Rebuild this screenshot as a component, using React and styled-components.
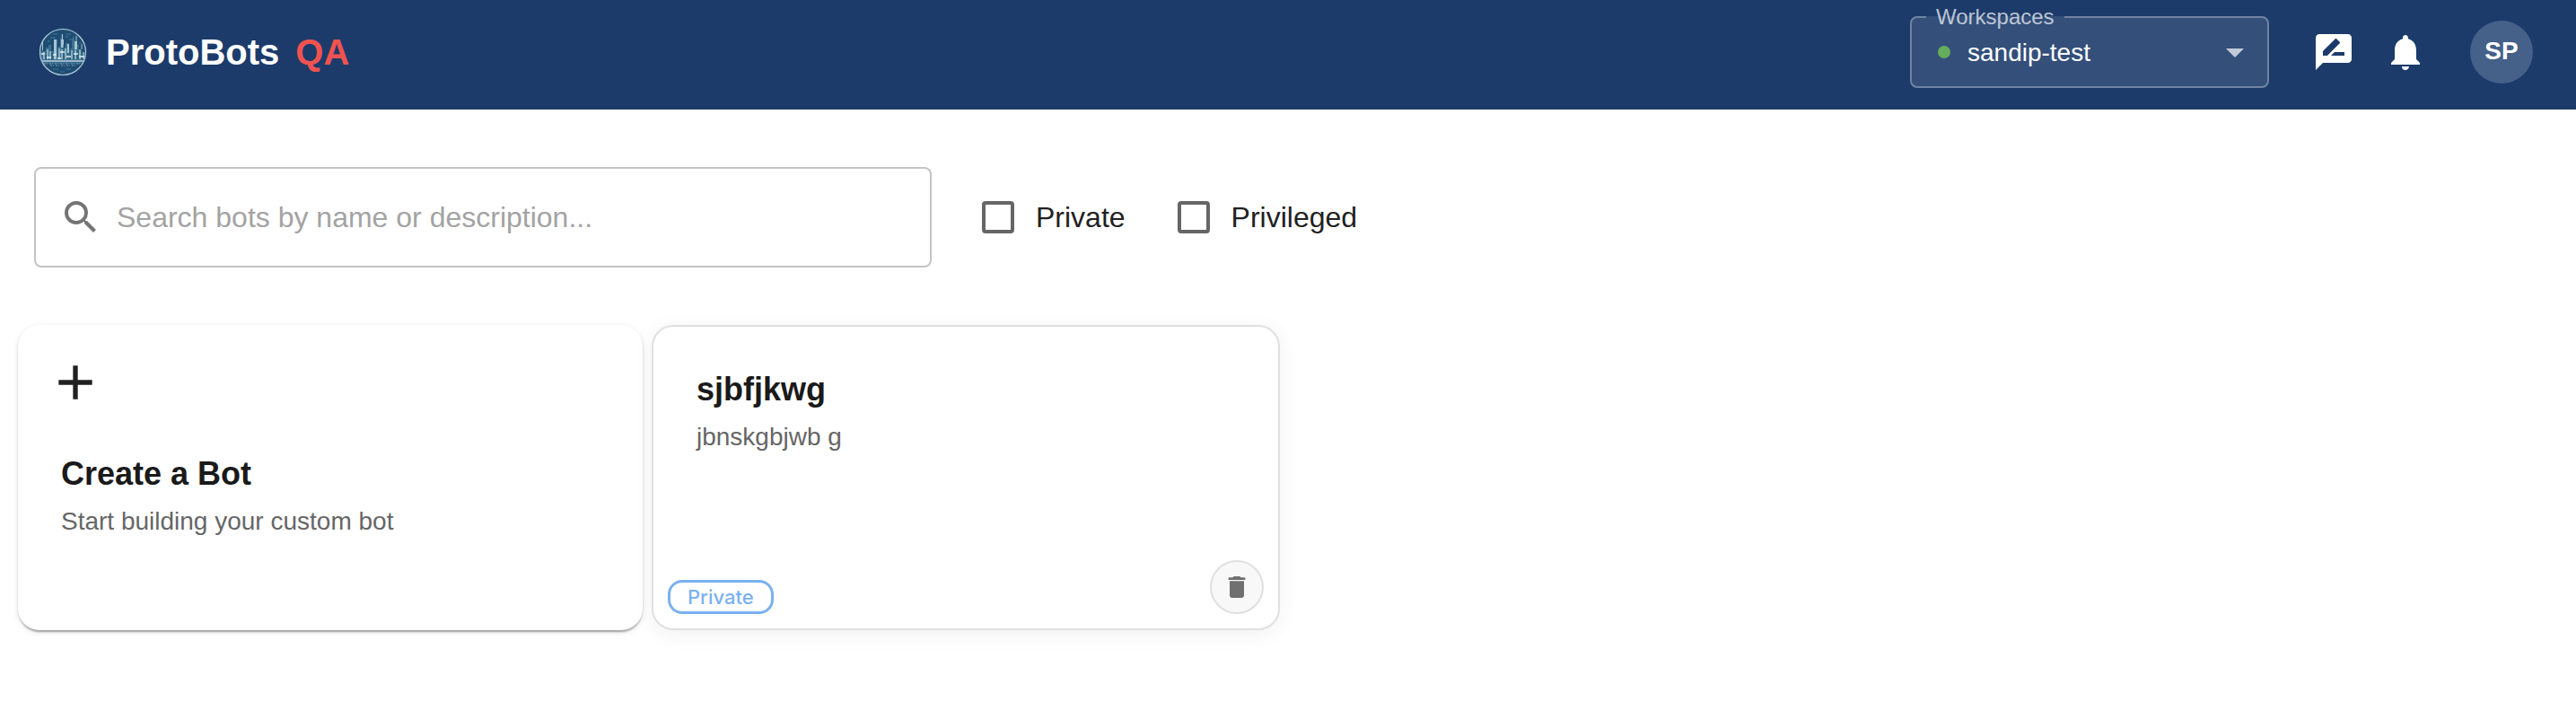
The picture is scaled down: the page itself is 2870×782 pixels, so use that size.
import React from "react";
import styled, { createGlobalStyle } from "styled-components";
import { MdRateReview, MdNotifications, MdSearch, MdAdd, MdDelete } from "react-icons/md";

const GlobalStyle = createGlobalStyle`
  *, *::before, *::after { box-sizing: border-box; }
  body {
    margin: 0;
    background: #fff;
    color: #212121;
    font-family: "Liberation Sans", Arial, sans-serif;
  }
  button, input, select { font-family: inherit; }
  h1, h2, p { margin: 0; }
`;

const Header = styled.header`
  display: flex;
  align-items: center;
  justify-content: space-between;
  min-height: 122px;
  padding: 0 48px 6px 44px;
  background: #1c3b6b;
`;

const Brand = styled.a`
  display: flex;
  align-items: center;
  gap: 18px;
  color: #fff;
  text-decoration: none;
`;

const BrandName = styled.h1`
  font-size: 40px;
  line-height: 48px;
  font-weight: 700;
`;

const EnvTag = styled.span`
  font-size: 40px;
  line-height: 48px;
  font-weight: 700;
  color: #ef5350;
`;

const HeaderActions = styled.div`
  display: flex;
  align-items: center;
`;

const WorkspaceField = styled.div`
  position: relative;
  width: 400px;
  height: 80px;
  margin-right: 32px;
  border-radius: 8px;
  background: rgba(255, 255, 255, 0.1);
`;

const WorkspaceOutline = styled.fieldset`
  position: absolute;
  inset: -11px 0 0;
  margin: 0;
  padding: 0 16px;
  border: 2px solid rgba(255, 255, 255, 0.3);
  border-radius: 8px;
  pointer-events: none;
`;

const WorkspaceLegend = styled.legend`
  padding: 0 11px;
  font-size: 24px;
  line-height: 24px;
  color: rgba(255, 255, 255, 0.7);
`;

const WorkspaceSelect = styled.select`
  width: 100%;
  height: 100%;
  padding: 0 60px 0 64px;
  border: 0;
  appearance: none;
  background: transparent;
  color: #fff;
  font-size: 28px;
`;

const StatusDot = styled.span`
  position: absolute;
  left: 31px;
  top: 33px;
  width: 14px;
  height: 14px;
  border-radius: 50%;
  background: #66ad5b;
  pointer-events: none;
`;

const Caret = styled.span`
  position: absolute;
  right: 28px;
  top: 36px;
  border: 10px solid transparent;
  border-top-color: rgba(255, 255, 255, 0.7);
  border-bottom: 0;
  pointer-events: none;
`;

const IconButton = styled.button`
  display: flex;
  padding: 16px;
  border: 0;
  border-radius: 50%;
  background: transparent;
  color: #fff;
  font-size: 48px;
`;

const Avatar = styled.button`
  width: 70px;
  height: 70px;
  margin-left: 32px;
  padding: 0 0 2px;
  border: 0;
  border-radius: 50%;
  background: #456089;
  color: #fff;
  font-size: 28px;
  font-weight: 700;
`;

const Filters = styled.form`
  display: flex;
  align-items: center;
  gap: 56px;
  padding: 64px 38px;
`;

const SearchField = styled.label`
  display: flex;
  align-items: center;
  gap: 16px;
  width: 1000px;
  height: 112px;
  padding: 0 26px;
  border: 2px solid #c4c4c4;
  border-radius: 8px;
  color: #757575;
  font-size: 48px;
`;

const SearchInput = styled.input`
  flex: 1;
  min-width: 0;
  padding: 0;
  border: 0;
  outline: 0;
  background: transparent;
  font-size: 32px;
  line-height: 46px;
  color: #212121;
  &::placeholder { color: #a3a3a3; opacity: 1; }
`;

const CheckGroup = styled.div`
  display: flex;
  gap: 58px;
`;

const CheckLabel = styled.label`
  display: flex;
  align-items: center;
  gap: 24px;
  font-size: 32px;
  line-height: 48px;
`;

const Checkbox = styled.input`
  appearance: none;
  width: 36px;
  height: 36px;
  margin: 0;
  border: 4px solid #666;
  border-radius: 4px;
  &:checked { background: #1c3b6b; }
`;

const Cards = styled.main`
  display: flex;
  flex-wrap: wrap;
  gap: 10px;
  padding: 0 20px 80px;
`;

const Card = styled.article`
  display: flex;
  flex-direction: column;
  height: 340px;
  border-radius: 24px;
  background: #fff;
`;

const CreateCard = styled(Card)`
  width: 696px;
  padding: 32px 48px;
  box-shadow: 0 4px 2px -2px rgba(0, 0, 0, 0.2), 0 2px 2px rgba(0, 0, 0, 0.14),
    0 2px 6px rgba(0, 0, 0, 0.12);
`;

const BotCard = styled(Card)`
  width: 700px;
  justify-content: space-between;
  padding: 46px 16px 16px;
  border: 2px solid #e0e0e0;
  box-shadow: 0 4px 24px rgba(0, 0, 0, 0.06);
`;

const AddButton = styled.button`
  display: flex;
  align-self: flex-start;
  margin: 0 0 46px -16px;
  padding: 0;
  border: 0;
  background: transparent;
  color: #212121;
  font-size: 64px;
`;

const CardText = styled.div`
  padding: 0 ${(p) => (p.$inset ? 32 : 0)}px;
`;

const CardTitle = styled.h2`
  margin-bottom: 8px;
  font-size: 36px;
  line-height: 48px;
  font-weight: 700;
  color: #1a1a1a;
`;

const CardDescription = styled.p`
  font-size: 28px;
  line-height: 42px;
  color: #666;
`;

const CardFooter = styled.footer`
  display: flex;
  align-items: flex-end;
  justify-content: space-between;
`;

const Chip = styled.span`
  display: flex;
  align-items: center;
  height: 38px;
  padding: 0 19px;
  border: 3px solid #7ab1f0;
  border-radius: 16px;
  font-family: Inter, sans-serif;
  font-size: 22px;
  font-weight: 500;
  line-height: 32px;
  color: #7ab1f0;
`;

const DeleteButton = styled.button`
  display: flex;
  align-items: center;
  justify-content: center;
  width: 60px;
  height: 60px;
  padding: 0;
  border: 2px solid #e0e0e0;
  border-radius: 50%;
  background: #f8f8f8;
  color: #707070;
  font-size: 32px;
`;

function CityLogo() {
  return (
    <svg width="56" height="56" viewBox="0 0 56 56" aria-hidden="true">
      <defs>
        <clipPath id="disc"><circle cx="26" cy="28" r="25" /></clipPath>
      </defs>
      <circle cx="26" cy="28" r="27" fill="#1f5077" opacity="0.6" />
      <circle cx="26" cy="28" r="25" fill="#1f4c72" />
      <g clipPath="url(#disc)">
        <path d="M12 12h6M15 8h5M30 8h5M33 14h5M29 11h3M9 16h3M44 18h3" stroke="#457896" strokeWidth="1" />
        <path d="M1 27h2V17h1v10h3v-4h3v-3h3v7h3V14h4v8h3V13l2-5 1 5v10h3v-5h4v6h3V14l2-4 1 4v10h3v-4h2v6h3v11H1z" fill="#3d7090" />
        <path d="M16 14h3v22h-3zM24 14h3v9h-3zM31 19h2v10h-2zM39 16h3v9h-3z" fill="#a5c5d2" />
        <path d="M25.500 8v6M41 10v6M3.500 17v9M47 19v6" stroke="#a5c5d2" strokeWidth="1" />
        <path d="M5 28v8M9 25v11M12 27v9M22 24v12M25 25v11M29 24v12M36 26v10M40 26v10M45 25v11M49 28v8" stroke="#a5c5d2" strokeWidth="1.500" />
        <path d="M7 30v7M14 28v9M20 18v18M27 20v16M34 22v14M38 28v8M43 22v14" stroke="#23547a" strokeWidth="1" />
        <path d="M2 30h4M8 34h5M15 31h4M23 28h5M30 33h5M38 30h5M44 33h6M20 35h4" stroke="#deedf1" strokeWidth="1.400" />
        <path d="M0 38h53" stroke="#c7dbe4" strokeWidth="1.400" />
        <path d="M0 39h52v2H0z" fill="#34668a" />
        <path d="M5 41h43M12 43h30" stroke="#7ba5bb" strokeDasharray="2 1 1 2" />
        <path d="M15 47h6M29 47h6M23 50h5" stroke="#3e718f" />
      </g>
      <circle cx="26" cy="28" r="25.500" fill="none" stroke="#b5ced9" strokeWidth="1.200" />
    </svg>
  );
}

export default function App() {
  return (
    <>
      <GlobalStyle />
      <Header>
        <Brand href="#">
          <CityLogo />
          <BrandName>ProtoBots</BrandName>
          <EnvTag>QA</EnvTag>
        </Brand>
        <HeaderActions>
          <WorkspaceField>
            <WorkspaceOutline>
              <WorkspaceLegend>Workspaces</WorkspaceLegend>
            </WorkspaceOutline>
            <StatusDot />
            <WorkspaceSelect aria-label="Workspaces" defaultValue="sandip-test">
              <option>sandip-test</option>
            </WorkspaceSelect>
            <Caret />
          </WorkspaceField>
          <IconButton aria-label="Feedback"><MdRateReview /></IconButton>
          <IconButton aria-label="Notifications"><MdNotifications /></IconButton>
          <Avatar>SP</Avatar>
        </HeaderActions>
      </Header>
      <Filters>
        <SearchField>
          <MdSearch />
          <SearchInput aria-label="Search bots" placeholder="Search bots by name or description..." />
        </SearchField>
        <CheckGroup>
          <CheckLabel><Checkbox type="checkbox" />Private</CheckLabel>
          <CheckLabel><Checkbox type="checkbox" />Privileged</CheckLabel>
        </CheckGroup>
      </Filters>
      <Cards>
        <CreateCard>
          <AddButton aria-label="Add"><MdAdd /></AddButton>
          <CardText>
            <CardTitle>Create a Bot</CardTitle>
            <CardDescription>Start building your custom bot</CardDescription>
          </CardText>
        </CreateCard>
        <BotCard>
          <CardText $inset>
            <CardTitle>sjbfjkwg</CardTitle>
            <CardDescription>jbnskgbjwb g</CardDescription>
          </CardText>
          <CardFooter>
            <Chip>Private</Chip>
            <DeleteButton aria-label="Delete bot"><MdDelete /></DeleteButton>
          </CardFooter>
        </BotCard>
      </Cards>
    </>
  );
}
